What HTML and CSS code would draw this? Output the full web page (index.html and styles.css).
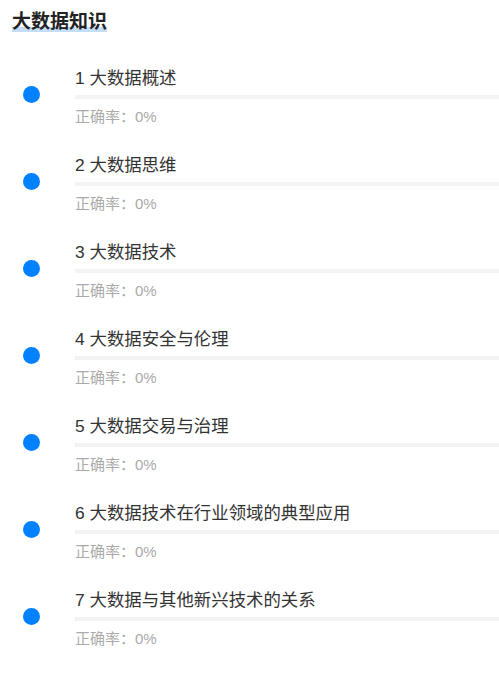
FILE: index.html
```html
<!DOCTYPE html>
<html lang="zh-CN">
<head>
<meta charset="utf-8">
<title>大数据知识</title>
<link rel="stylesheet" href="styles.css">
</head>
<body>
<div class="page">
  <div class="header">
    <h1 class="title">大数据知识</h1>
  </div>
  <ul class="list">
    <li class="item"><span class="dot"></span><div class="content"><div class="name">1 大数据概述</div><div class="bar"></div><div class="rate">正确率：0%</div></div></li>
    <li class="item"><span class="dot"></span><div class="content"><div class="name">2 大数据思维</div><div class="bar"></div><div class="rate">正确率：0%</div></div></li>
    <li class="item"><span class="dot"></span><div class="content"><div class="name">3 大数据技术</div><div class="bar"></div><div class="rate">正确率：0%</div></div></li>
    <li class="item"><span class="dot"></span><div class="content"><div class="name">4 大数据安全与伦理</div><div class="bar"></div><div class="rate">正确率：0%</div></div></li>
    <li class="item"><span class="dot"></span><div class="content"><div class="name">5 大数据交易与治理</div><div class="bar"></div><div class="rate">正确率：0%</div></div></li>
    <li class="item"><span class="dot"></span><div class="content"><div class="name">6 大数据技术在行业领域的典型应用</div><div class="bar"></div><div class="rate">正确率：0%</div></div></li>
    <li class="item"><span class="dot"></span><div class="content"><div class="name">7 大数据与其他新兴技术的关系</div><div class="bar"></div><div class="rate">正确率：0%</div></div></li>
  </ul>
</div>
</body>
</html>
```
FILE: styles.css
```css
html, body {
  margin: 0;
  padding: 0;
  background: #ffffff;
}
body {
  font-family: "Liberation Sans", "Noto Sans CJK SC", sans-serif;
  color: #333333;
}
.page {
  width: 499px;
}
.header {
  padding: 9px 0 0 12px;
  margin-bottom: 16px;
}
.title {
  display: inline-block;
  margin: 0;
  font-size: 19px;
  line-height: 26px;
  font-weight: bold;
  color: #222222;
  background-image: linear-gradient(#c4def7, #c4def7);
  background-repeat: no-repeat;
  background-size: 100% 5px;
  background-position: 0 18px;
  border-radius: 2px;
}
.list {
  list-style: none;
  margin: 0;
  padding: 0;
}
.item {
  display: flex;
  align-items: center;
  height: 87px;
}
.dot {
  flex: none;
  width: 17px;
  height: 17px;
  border-radius: 50%;
  background: #0081ff;
  margin-left: 23px;
  margin-right: 35px;
}
.content {
  flex: 1;
  padding-top: 3px;
}
.name {
  font-size: 17.4px;
  line-height: 24px;
  color: #333333;
}
.bar {
  height: 4px;
  margin-top: 4.5px;
  background: #f3f3f3;
}
.rate {
  margin-top: 8px;
  font-size: 15px;
  line-height: 19px;
  color: #aaaaaa;
}
```
